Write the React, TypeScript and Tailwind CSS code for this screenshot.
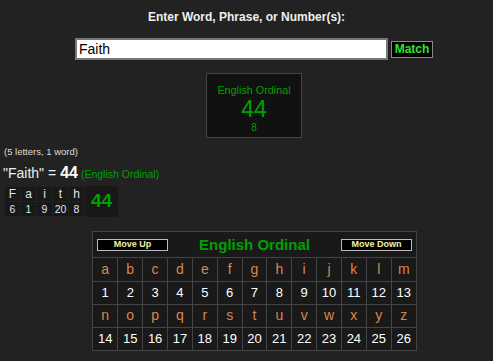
import React from 'react';

const word = [
    { ch: 'F', v: 6 },
    { ch: 'a', v: 1 },
    { ch: 'i', v: 9 },
    { ch: 't', v: 20 },
    { ch: 'h', v: 8 },
];

const row1 = 'abcdefghijklm'.split('');
const row2 = 'nopqrstuvwxyz'.split('');

export default function App() {
    return (
        <div className="w-[493px] h-[361px] bg-[#222222] overflow-hidden" style={{ fontFamily: '"Liberation Sans", Arial, sans-serif' }}>
            <div className="pt-[10px] text-center text-[12px] font-bold text-[#eeeeee] leading-[14px]">
                Enter Word, Phrase, or Number(s):
            </div>
            <div className="flex items-center mt-[14px] ml-[75px] h-[22px]">
                <div className="w-[313px] h-[22px] bg-white border-2 border-[#777777] flex items-center pl-[2px] text-[14px] text-black">
                    Faith
                </div>
                <div className="ml-[3px] w-[42px] h-[17px] bg-black border border-[#888888] flex items-center justify-center text-[12px] font-bold text-[#33e033]">
                    Match
                </div>
            </div>
            <div className="flex mt-[13px] ml-[206px]">
                <div className="w-[96px] h-[65px] bg-[#111111] border border-[#444444] flex flex-col items-center text-[#00a000]">
                    <div className="mt-[10px] text-[10.8px] leading-[12px]">English Ordinal</div>
                    <div className="text-[23px] leading-[23px] mt-[2px]">44</div>
                    <div className="text-[10px] leading-[12px] mt-[1px]">8</div>
                </div>
            </div>
            <div className="mt-[9px] ml-[4px] text-[9.5px] leading-[10px] text-[#dddddd]">(5 letters, 1 word)</div>
            <div className="mt-[8px] ml-[3px] flex items-baseline leading-[16px]">
                <span className="text-[14px] text-[#eeeeee]">"Faith" = </span>
                <span className="text-[16px] font-bold text-white ml-[4px]">44</span>
                <span className="text-[10.5px] text-[#00a000] ml-[3px]">(English Ordinal)</span>
            </div>
            <div className="mt-[4px] ml-[4px] flex items-center bg-[#181818] w-[114px] h-[31px]">
                <table className="border-collapse">
                    <tbody>
                        <tr>
                            {word.map((w, i) => (
                                <td key={i} className="w-[16px] h-[15px] border border-[#222222] text-center text-[12px] leading-[13px] text-[#dde6f0] px-0">
                                    {w.ch}
                                </td>
                            ))}
                        </tr>
                        <tr>
                            {word.map((w, i) => (
                                <td key={i} className="h-[15px] border border-[#222222] text-center text-[10.5px] leading-[13px] text-[#dde6f0] px-0">
                                    {w.v}
                                </td>
                            ))}
                        </tr>
                    </tbody>
                </table>
                <div className="flex-1 text-center text-[19px] font-bold text-[#00a000]">44</div>
            </div>
            <div className="mt-[14px] ml-[92px] w-[325px] border border-[#444444] bg-[#191919]">
                <div className="h-[26px] flex items-center justify-between px-[4px] border-b border-[#444444]">
                    <div className="w-[71px] h-[12px] bg-black border border-[#bbbbbb] flex items-center justify-center text-[9px] font-bold text-[#f5f0a0] leading-none">
                        Move Up
                    </div>
                    <div className="text-[15px] font-bold text-[#00a000] leading-none">English Ordinal</div>
                    <div className="w-[71px] h-[12px] bg-black border border-[#bbbbbb] flex items-center justify-center text-[9px] font-bold text-[#f5f0a0] leading-none">
                        Move Down
                    </div>
                </div>
                <table className="border-collapse w-full table-fixed">
                    <tbody>
                        {[row1, row2].map((r, ri) => (
                            <React.Fragment key={ri}>
                                <tr>
                                    {r.map((c, ci) => (
                                        <td key={c} className={`h-[23px] text-center text-[14px] text-[#d9874c] border-[#444444] border-b ${ci < 12 ? 'border-r' : ''}`}>
                                            {c}
                                        </td>
                                    ))}
                                </tr>
                                <tr>
                                    {r.map((c, ci) => (
                                        <td key={c} className={`h-[23px] text-center text-[13px] text-white border-[#444444] ${ri === 0 ? 'border-b' : ''} ${ci < 12 ? 'border-r' : ''}`}>
                                            {ci + 1 + ri * 13}
                                        </td>
                                    ))}
                                </tr>
                            </React.Fragment>
                        ))}
                    </tbody>
                </table>
            </div>
        </div>
    );
}
